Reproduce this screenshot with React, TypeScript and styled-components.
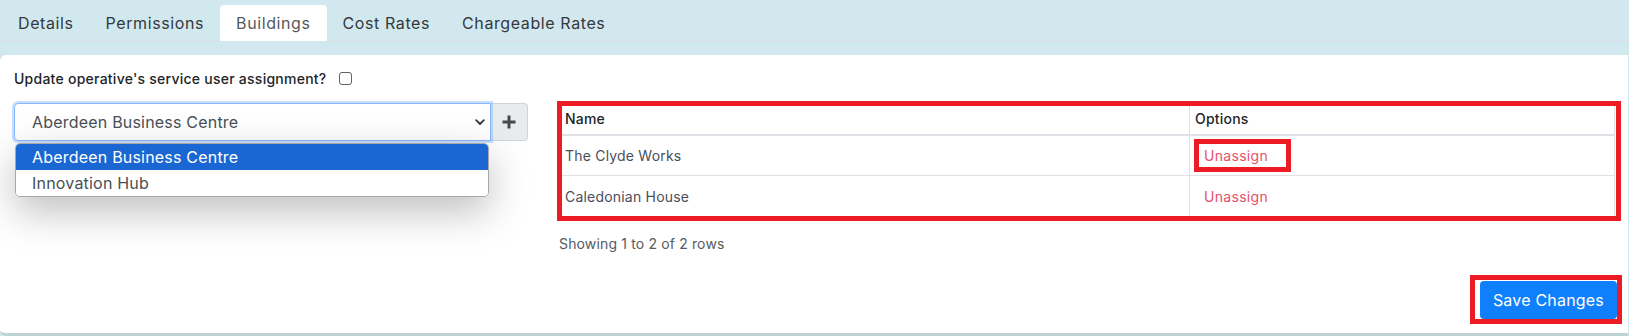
import styled, { createGlobalStyle } from 'styled-components'

const GlobalStyle = createGlobalStyle`
  html, body {
    margin: 0;
    padding: 0;
    background: #d1e9ee;
    font-family: Inter, 'Open Sans', sans-serif;
  }
  * {
    box-sizing: border-box;
  }
`

const Page = styled.div`
  width: 1629px;
  height: 336px;
  overflow: hidden;
`

const TabBar = styled.div`
  display: flex;
  padding: 5px 0 0 2px;
  height: 41px;
  border-bottom: 1px solid #d9e0e3;
`

const Tab = styled.div<{ $active?: boolean }>`
  height: 36px;
  padding: 0 16px;
  display: flex;
  align-items: center;
  font-size: 16px;
  letter-spacing: 0.6px;
  color: ${(p) => (p.$active ? '#555a60' : '#34383e')};
  background: ${(p) => (p.$active ? '#fff' : 'transparent')};
  border-radius: 4px 4px 0 0;
`

const Panel = styled.div`
  margin: 14px 1px 0 0;
  height: 281px;
  background: #fff;
  border-radius: 6px 0 0 6px;
  border-bottom: 3px solid #bfd2d6;
  padding: 13px 13px 14px 14px;
`

const CheckRow = styled.label`
  display: flex;
  align-items: center;
  gap: 12px;
  height: 21px;
  font-size: 14px;
  letter-spacing: 0.25px;
  font-weight: 500;
  color: #212529;
`

const CheckBox = styled.span`
  width: 13px;
  height: 13px;
  border: 1px solid #5f6368;
  border-radius: 3px;
  background: #fff;
`

const Content = styled.div`
  display: grid;
  grid-template-columns: 514px 1fr;
  column-gap: 31px;
  margin-top: 14px;
`

const SelectGroup = styled.div`
  position: relative;
  display: flex;
  height: 38px;
`

const SelectBox = styled.div`
  flex: 1;
  display: flex;
  align-items: center;
  justify-content: space-between;
  padding: 0 5px 0 17px;
  border: 1px solid #86b7fe;
  border-radius: 4px 0 0 4px;
  box-shadow: 0 0 0 2px rgba(134, 183, 254, 0.45);
  font-size: 16px;
  letter-spacing: 0.2px;
  color: #495057;
  background: #fff;
  position: relative;
  z-index: 1;
`

const AddButton = styled.div`
  width: 37px;
  display: flex;
  align-items: center;
  justify-content: center;
  background: #e9ecef;
  border: 1px solid #ced4da;
  border-left: none;
  border-radius: 0 4px 4px 0;
`

const Dropdown = styled.ul`
  position: absolute;
  top: 40px;
  left: 1px;
  width: 474px;
  margin: 0;
  padding: 0;
  list-style: none;
  background: #fff;
  border: 1px solid #a9a9a9;
  border-radius: 5px;
  box-shadow: 0 14px 40px rgba(0, 0, 0, 0.26);
  overflow: hidden;
  z-index: 2;
`

const Option = styled.li<{ $selected?: boolean }>`
  height: 26px;
  display: flex;
  align-items: center;
  padding-left: 16px;
  font-size: 16px;
  letter-spacing: 0.2px;
  color: ${(p) => (p.$selected ? '#fff' : '#4a4f55')};
  background: ${(p) => (p.$selected ? '#1a66d2' : '#fff')};
`

const RightCol = styled.div`
  display: flex;
  flex-direction: column;
`

const Highlight = styled.div<{ $inset: string; $inline?: boolean }>`
  position: relative;
  display: ${(p) => (p.$inline ? 'inline-block' : 'block')};
  vertical-align: middle;
  &::after {
    content: '';
    position: absolute;
    inset: ${(p) => p.$inset};
    border: 5px solid #ed1c24;
    pointer-events: none;
  }
`

const Table = styled.table`
  width: 100%;
  border-collapse: collapse;
  font-size: 14px;
  letter-spacing: 0.2px;
  border: 1px solid #dee2e6;
`

const Th = styled.th<{ $w?: string }>`
  text-align: left;
  font-weight: 500;
  color: #212529;
  height: 31px;
  padding: 0 5px;
  width: ${(p) => p.$w || 'auto'};
  border-bottom: 2px solid #dee2e6;
  border-left: 1px solid #dee2e6;
  &:first-child {
    border-left: none;
  }
`

const Td = styled.td`
  height: 41px;
  padding: 0 5px;
  color: #4a4e5a;
  border-bottom: 1px solid #dee2e6;
  border-left: 1px solid #dee2e6;
  &:first-child {
    border-left: none;
  }
`

const LinkButton = styled.span`
  display: inline-block;
  padding: 5px 8px 5px 9px;
  line-height: 21px;
  color: #e5506c;
  font-size: 14px;
  letter-spacing: 0.3px;
`

const Footer = styled.div`
  margin-top: 16px;
  font-size: 14px;
  letter-spacing: 0.15px;
  color: #555b62;
  line-height: 21px;
`

const Actions = styled.div`
  display: flex;
  justify-content: flex-end;
  margin: 27px -2px 0 0;
`

const SaveButton = styled.button`
  display: block;
  height: 38px;
  padding: 0 13px;
  border: none;
  border-radius: 4px;
  background: #0f7ffb;
  color: #fff;
  font-family: inherit;
  font-size: 16px;
  letter-spacing: 0.2px;
`

const Chevron = () => (
  <svg width='10' height='7' viewBox='0 0 10 7'>
    <path d='M1.2 1.2l3.8 3.8 3.8-3.8' fill='none' stroke='#343a40' strokeWidth='1.8' strokeLinecap='round' strokeLinejoin='round' />
  </svg>
)

const Plus = () => (
  <svg width='14' height='14' viewBox='0 0 14 14'>
    <path d='M7 0.5v13M0.5 7h13' stroke='#45494d' strokeWidth='3' />
  </svg>
)

const tabs = ['Details', 'Permissions', 'Buildings', 'Cost Rates', 'Chargeable Rates']
const buildings = ['The Clyde Works', 'Caledonian House']

export default function App() {
  return (
    <Page>
      <GlobalStyle />
      <TabBar>
        {tabs.map((t) => (
          <Tab key={t} $active={t === 'Buildings'}>
            {t}
          </Tab>
        ))}
      </TabBar>
      <Panel>
        <CheckRow>
          Update operative's service user assignment? <CheckBox />
        </CheckRow>
        <Content>
          <div>
            <SelectGroup>
              <SelectBox>
                Aberdeen Business Centre
                <Chevron />
              </SelectBox>
              <AddButton>
                <Plus />
              </AddButton>
              <Dropdown>
                <Option $selected>Aberdeen Business Centre</Option>
                <Option>Innovation Hub</Option>
              </Dropdown>
            </SelectGroup>
          </div>
          <RightCol>
            <Highlight $inset='-2px -6px -4px -2px'>
              <Table>
                <thead>
                  <tr>
                    <Th $w='630px'>Name</Th>
                    <Th>Options</Th>
                  </tr>
                </thead>
                <tbody>
                  {buildings.map((b, i) => (
                    <tr key={b}>
                      <Td>{b}</Td>
                      <Td>
                        {i === 0 ? (
                          <Highlight $inline $inset='-1px -15px -1px -1px'>
                            <LinkButton>Unassign</LinkButton>
                          </Highlight>
                        ) : (
                          <LinkButton>Unassign</LinkButton>
                        )}
                      </Td>
                    </tr>
                  ))}
                </tbody>
              </Table>
            </Highlight>
            <Footer>Showing 1 to 2 of 2 rows</Footer>
            <Actions>
              <Highlight $inset='-6px -5px -5px -10px'>
                <SaveButton>Save Changes</SaveButton>
              </Highlight>
            </Actions>
          </RightCol>
        </Content>
      </Panel>
    </Page>
  )
}
